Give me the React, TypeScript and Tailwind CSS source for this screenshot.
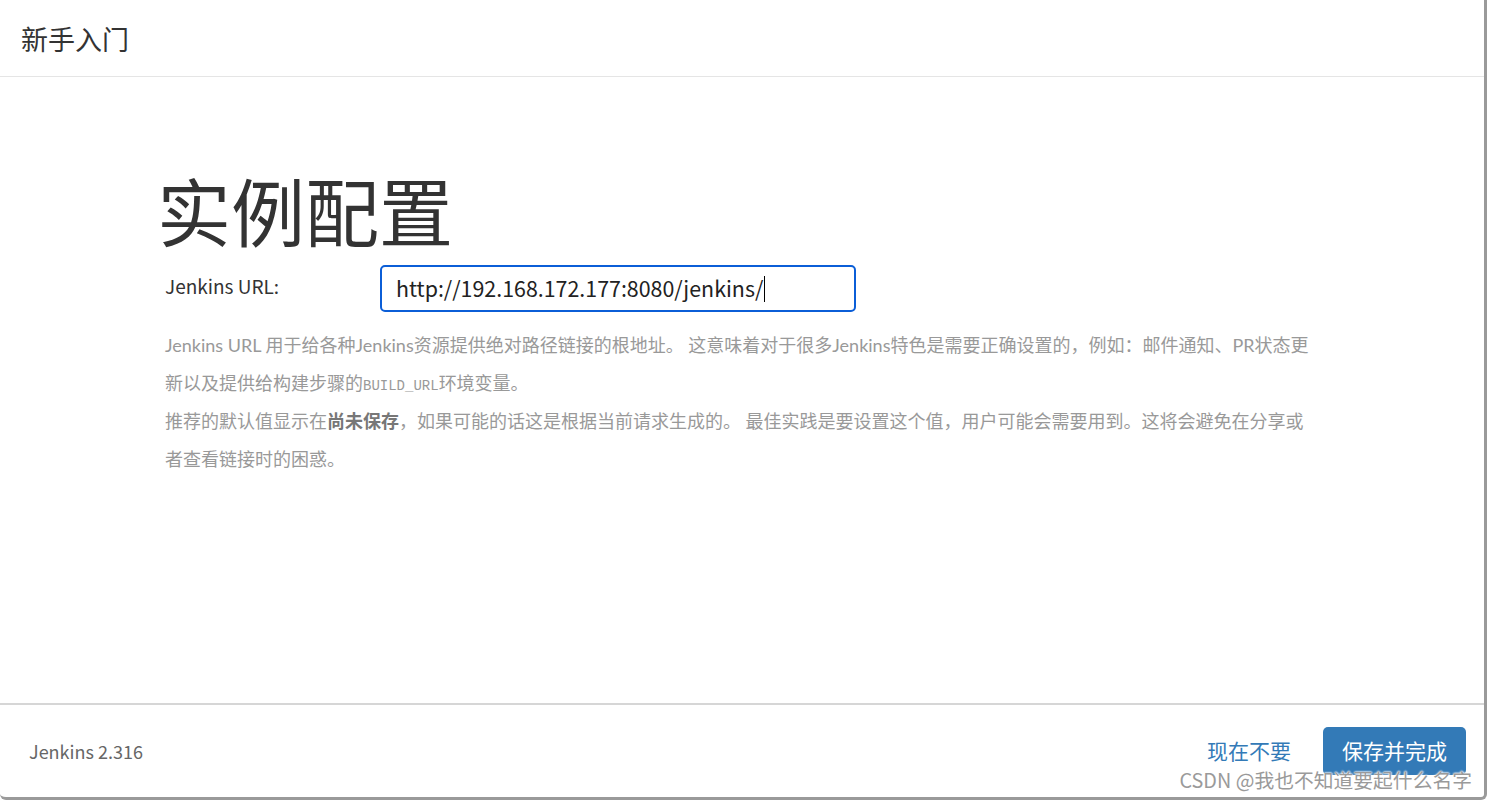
import React from "react";

const font = { fontFamily: '"Noto Sans CJK SC", "Noto Sans", sans-serif' };
const helpFont = { fontFamily: 'Lato, "Noto Sans CJK SC", sans-serif' };

export default function App() {
  return (
    <div className="w-[1487px] h-[800px] bg-white" style={font}>
      <div className="relative w-[1487px] h-[800px] bg-white border-r-[3px] border-b-[3px] border-[#9a9a9a] rounded-b-md flex flex-col overflow-hidden">
        {/* Header */}
        <div className="h-[77px] shrink-0 border-b border-[#e5e5e5] flex items-center pl-[21px]">
          <h2 className="text-[27px] text-[#333] leading-none">新手入门</h2>
        </div>

        {/* Body */}
        <div className="flex-1 pl-[165px] pt-[95px]">
          <h1 className="text-[74px] leading-none text-[#333] -ml-[8px]">实例配置</h1>

          <div className="flex items-start mt-[19px]">
            <label className="w-[215px] text-[19px] text-[#333] pt-[7px]">Jenkins URL:</label>
            <div className="w-[476px] h-[47px] border-2 border-[#0b5ed7] rounded-[5px] flex items-center pl-[14px] text-[21.4px] text-[#222]">
              <span>http://192.168.172.177:8080/jenkins/</span>
              <span className="inline-block w-px h-[26px] bg-black ml-px"></span>
            </div>
          </div>

          <div className="w-[1145px] mt-[14px] text-[18px] leading-[38px] text-[#999]" style={helpFont}>
            <p>
              Jenkins URL 用于给各种Jenkins资源提供绝对路径链接的根地址。 这意味着对于很多Jenkins特色是需要正确设置的，例如：邮件通知、PR状态更新以及提供给构建步骤的
              <code className="text-[14px] leading-none" style={{ fontFamily: '"Liberation Mono", monospace' }}>BUILD_URL</code>
              环境变量。
            </p>
            <p>
              推荐的默认值显示在<strong className="font-bold text-[#777]">尚未保存</strong>，如果可能的话这是根据当前请求生成的。 最佳实践是要设置这个值，用户可能会需要用到。这将会避免在分享或者查看链接时的困惑。
            </p>
          </div>
        </div>

        {/* Footer */}
        <div className="h-[94px] shrink-0 border-t-2 border-[#d6d6d6] flex items-center justify-between pl-[29px] pr-[18px]">
          <span className="text-[18px] text-[#666]">Jenkins 2.316</span>
          <div className="flex items-center gap-[32px]">
            <button className="text-[21px] text-[#337ab7]">现在不要</button>
            <button className="w-[143px] h-[48px] rounded-[5px] bg-[#337ab7] text-white text-[21px]">保存并完成</button>
          </div>
        </div>

        {/* watermark */}
        <div
          className="absolute right-[12px] bottom-[7px] text-[19.8px] text-[#9a9a9a] leading-none"
          style={{ textShadow: "0 0 2px #fff, 0 0 2px #fff, 0 0 2px #fff" }}
        >
          CSDN @我也不知道要起什么名字
        </div>
      </div>
    </div>
  );
}
